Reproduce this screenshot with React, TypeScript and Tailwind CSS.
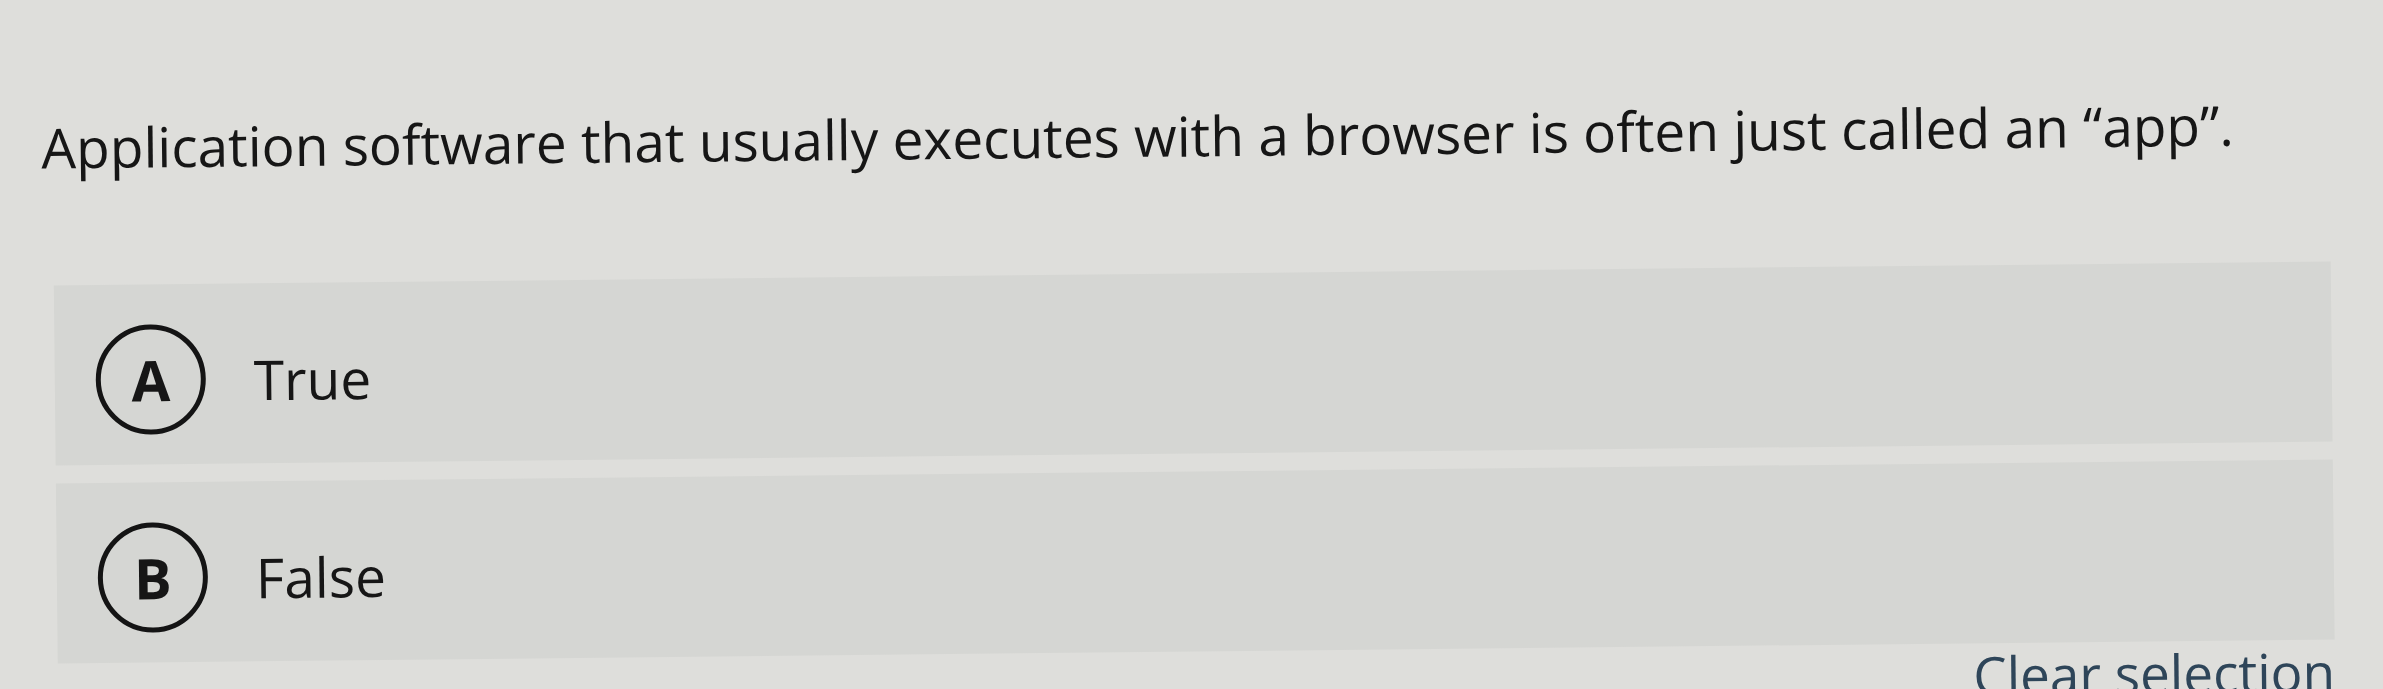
const options = [
  { key: "A", label: "True" },
  { key: "B", label: "False" },
];

export default function App() {
  return (
    <div className="w-[2383px] h-[689px] overflow-hidden bg-[#dededb] font-['Open_Sans',_'Noto_Sans',_sans-serif] text-[#161616]">
      {/* photo is slightly tilted */}
      <div className="-rotate-[0.6deg] origin-[0_400px]">
        <p className="pl-[44px] pt-[111px] text-[55px] leading-[74px] whitespace-nowrap">
          Application software that usually executes with a browser is often just called an “app”.
        </p>

        <div className="mt-[101px] ml-[55px] mr-[51px] flex flex-col gap-[18px]">
          {options.map((opt) => (
            <div key={opt.key} className="h-[180px] bg-[#d5d6d3] flex items-center pl-[41px] pt-[10px]">
              <div className="w-[110px] h-[110px] rounded-full border-[5px] border-[#141414] flex items-center justify-center text-[56px] font-bold leading-none">
                {opt.key}
              </div>
              <span className="ml-[48px] text-[55px] leading-none">{opt.label}</span>
            </div>
          ))}
        </div>

        <div className="mr-[51px] mt-[-4px] flex justify-end">
          <button className="text-[53px] leading-[72px] text-[#2e4559]">Clear selection</button>
        </div>
      </div>
    </div>
  );
}
